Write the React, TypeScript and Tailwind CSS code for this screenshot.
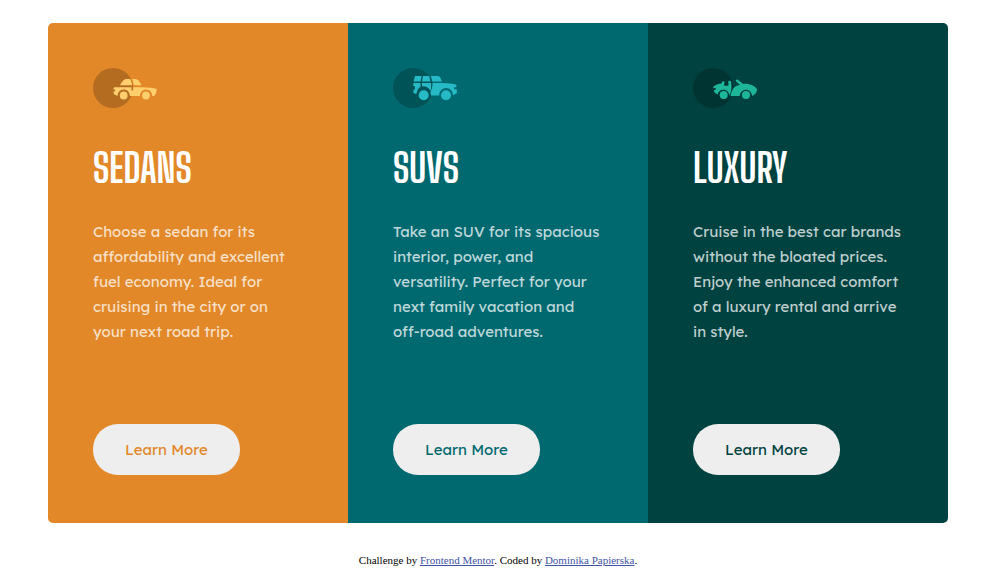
import type { ReactNode } from "react";

function SedanIcon() {
  return (
    <svg width="64" height="40" viewBox="0 0 64 40" aria-hidden="true">
      <circle cx="20" cy="20" r="20" fill="#000" fillOpacity=".2" />
      <g fill="#FFCF6E">
        <path d="M27 17.200c2-3.500 3.800-6.200 6.700-6.200h3.400c1.100 1.600 1.800 3.900 2.100 6.200zM38.800 11h3.600c2.600 0 4.700 3 6 6.200h-7.700c-.2-2.300-.8-4.500-1.900-6.200z" />
        <path d="M21.200 19.200h17.300c.1 1.100.1 2-.1 3.200h1.600c.2-1.100.3-2.100.2-3.200h8.900c6 .1 11.400.9 14.400 1.700.6 2.600-.7 5.100-2.500 7.100h-1.800c.2-3.600-2.600-6.600-6.100-6.600s-6.300 2.900-6 6.600H36.800c.3-3.700-2.500-6.600-6.100-6.600s-6 2.800-6 6.300l-3.200-.9-1.300-3 2-.6v-1.600h-2z" />
        <circle cx="30.700" cy="27.500" r="3.900" /><circle cx="53" cy="27.500" r="3.900" />
      </g>
    </svg>
  );
}

function SuvIcon() {
  return (
    <svg width="64" height="40" viewBox="0 0 64 40" aria-hidden="true">
      <circle cx="20" cy="20" r="20" fill="#000" fillOpacity=".2" />
      <g fill="#26BAC6">
        <path d="M22 8h6.600l-1 5.500h-7zM30 8h6l1.500 5.500h-8.500zM37.900 8h7c2 0 3 2.800 4.100 5.500h-9.600z" />
        <path d="M20.500 15h7v3.900c-1.600.9-2.800 2.300-3.300 4.200l-.8 2.900-3-1v-3.300h1.400V18h-1.600zM29 15h9.100v3.400c0 1.600-.2 3.200-.6 4.600-1.400-3-4.600-4.900-8.500-4.600zM39.600 15h9.500c5.800 0 11 .7 14.300 1.800v2.500h-2.200v1.900h2.600v4l-3.800 2c-.3-4.300-2.900-7.300-6.900-7.300s-6.900 3.200-6.900 7.500h-8.300c-.1-1.200-.2-2.100-.5-3 1.200-2.600 2.200-5.900 2.200-9.400z" />
        <circle cx="30.700" cy="27.200" r="5" /><circle cx="53" cy="27.200" r="5" />
      </g>
    </svg>
  );
}

function LuxuryIcon() {
  return (
    <svg width="64" height="40" viewBox="0 0 64 40" aria-hidden="true">
      <circle cx="20" cy="20" r="20" fill="#000" fillOpacity=".2" />
      <g fill="#1EB69A">
        <path d="M20.300 18.800c2.200-1.900 4.900-3 8.100-3.300l.8-1.800c.6-1 2.500-.4 2.300.8l-.6 2.700c1.500.8 3.400.8 4.700 0l-.4-3.200c0-1.400 2.500-1.600 2.800-.2l.5 4.600c.1 3.300-.9 6.600-2.300 9.400-.2-3.500-2.300-6-5.500-6-3.200 0-5.400 1.800-6.100 4.800l-2.700-1.600-1.300-2.500 2.300-1-.3-1.600-2.300.4z" />
        <path d="M43 13.400c-.6-1.200 1-2.500 2-1.700l4.900 4.100c6.200-.2 11.500 1.500 14.100 5.300.1 3-1.800 5.800-4.900 6.800-.2-3.600-2.700-6.200-6.100-6.200-3.500 0-6 2.600-6.200 6.200h-9.300c.7-4 2.600-8.300 5.600-9.900l4-1.200z" />
        <circle cx="30.700" cy="27" r="4" /><circle cx="53" cy="27" r="4" />
      </g>
    </svg>
  );
}

type CardProps = { title: string; text: string; icon: ReactNode; background: string; accent: string };

const cards: CardProps[] = [
  {
    title: "SEDANS",
    text: "Choose a sedan for its affordability and excellent fuel economy. Ideal for cruising in the city or on your next road trip.",
    icon: <SedanIcon />,
    background: "bg-[#e28828]",
    accent: "text-[#e28828]",
  },
  {
    title: "SUVS",
    text: "Take an SUV for its spacious interior, power, and versatility. Perfect for your next family vacation and off-road adventures.",
    icon: <SuvIcon />,
    background: "bg-[#00696f]",
    accent: "text-[#00696f]",
  },
  {
    title: "LUXURY",
    text: "Cruise in the best car brands without the bloated prices. Enjoy the enhanced comfort of a luxury rental and arrive in style.",
    icon: <LuxuryIcon />,
    background: "bg-[#004240]",
    accent: "text-[#004240]",
  },
];

function Card({ title, text, icon, background, accent }: CardProps) {
  return (
    <article className={`flex flex-col items-start px-[45px] pt-[45px] pb-12 ${background}`}>
      {icon}
      <h2 className="mt-8 font-['Big_Shoulders_Display','Big_Shoulders',sans-serif] text-[40px] leading-[56px] font-bold text-white">
        {title}
      </h2>
      <p className="mt-[23px] mb-20 font-[Lexend_Deca,Inter,sans-serif] text-[15px] leading-[25px] text-white/75">
        {text}
      </p>
      <button
        type="button"
        className={`mt-auto cursor-pointer rounded-[25px] bg-[#eee] px-8 py-[13px] font-[Lexend_Deca,Inter,sans-serif] text-[15px] leading-[25px] ${accent}`}
      >
        Learn More
      </button>
    </article>
  );
}

export default function App() {
  return (
    <div className="bg-white pt-[23px] pr-9 pl-12">
      <main className="mx-auto grid max-w-[900px] overflow-hidden rounded-[5px] sm:min-h-[500px] sm:grid-cols-3">
        {cards.map((card) => (
          <Card key={card.title} {...card} />
        ))}
      </main>
      <footer className="mt-[29px] text-center font-['Liberation_Serif',serif] text-[11px] leading-4 text-black">
        Challenge by{" "}
        <a href="https://www.frontendmentor.io" className="text-[#3e52a3] underline">Frontend Mentor</a>. Coded by{" "}
        <a href="#" className="text-[#3e52a3] underline">Dominika Papierska</a>.
      </footer>
    </div>
  );
}
